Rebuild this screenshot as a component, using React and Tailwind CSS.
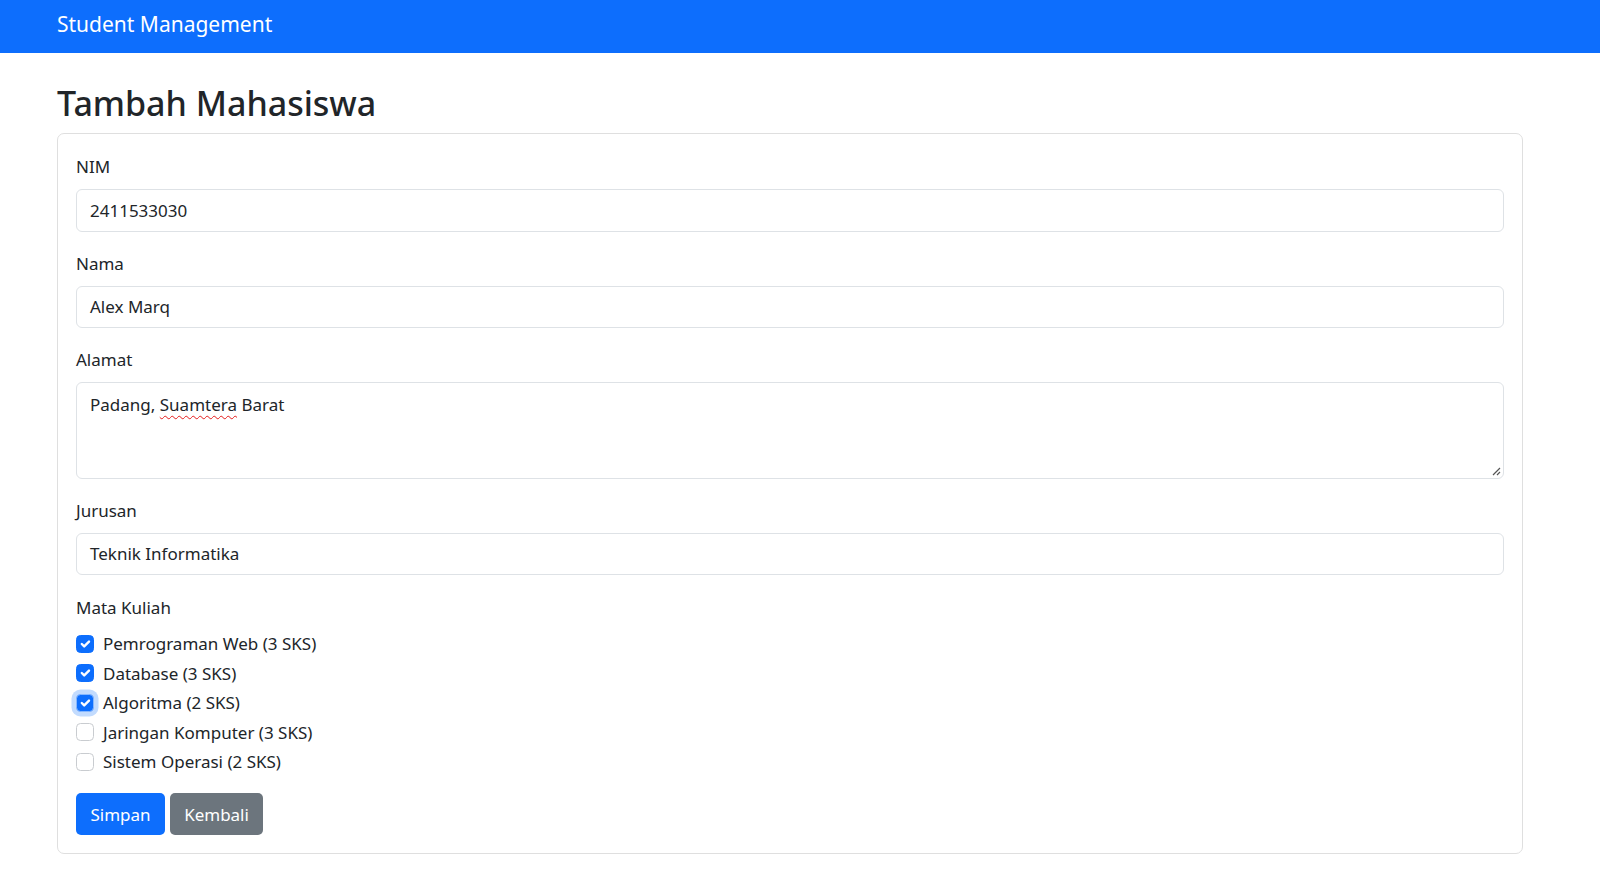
import { useState } from "react";

const COURSES = [
  { name: "Pemrograman Web (3 SKS)", checked: true },
  { name: "Database (3 SKS)", checked: true },
  { name: "Algoritma (2 SKS)", checked: true, focus: true },
  { name: "Jaringan Komputer (3 SKS)", checked: false },
  { name: "Sistem Operasi (2 SKS)", checked: false },
];

const inputCls =
  "block w-full h-[42.5px] px-[13px] border border-[#dee2e6] rounded-[6px] bg-white text-[17px] text-[#212529] outline-none";

const Field = ({ label, last, children }) => (
  <div className={last ? "mb-[19px]" : "mb-[18px]"}>
    <label className="block mb-[9px] leading-[27px]">{label}</label>
    {children}
  </div>
);

const CheckBox = ({ checked, focus, onToggle }) => (
  <span
    onClick={onToggle}
    className={`mt-[4.5px] flex-none w-[18px] h-[18px] rounded-[4.5px] border flex items-center justify-center ${
      checked ? "bg-[#0d6efd] border-[#0d6efd]" : "bg-white border-[#c9ccd0]"
    } ${focus ? "shadow-[0_0_0_4.5px_rgba(13,110,253,0.25)] border-[#86b7fe]" : ""}`}
  >
    {checked && (
      <svg viewBox="0 0 20 20" className="w-[18px] h-[18px]" fill="none" stroke="#fff" strokeWidth="3" strokeLinecap="round" strokeLinejoin="round">
        <path d="M6 10l3 3l6-6" />
      </svg>
    )}
  </span>
);

const App = () => {
  const [courses, setCourses] = useState(COURSES);

  const toggle = (i) =>
    setCourses((prev) => prev.map((c, idx) => (idx === i ? { ...c, checked: !c.checked } : c)));

  return (
    <div className="min-h-screen w-full bg-white text-[#212529] text-[17px] font-['Segoe_UI','Noto_Sans',sans-serif]">
      {/* Navbar */}
      <nav className="h-[53px] bg-[#0d6efd] flex items-center pl-[57px]">
        <span className="text-white text-[21px] leading-none -mt-[5px]">Student Management</span>
      </nav>

      <div className="pl-[57px] pt-[29px]">
        <h2 className="text-[34px] font-medium leading-[43px] mb-[8px]">Tambah Mahasiswa</h2>

        <div className="w-[1466px] border border-[#dfdfdf] rounded-[7px] px-[18px] pt-[19px] pb-[18px]">
          <Field label="NIM">
            <div className={`${inputCls} flex items-center`}>2411533030</div>
          </Field>

          <Field label="Nama">
            <div className={`${inputCls} flex items-center`}>Alex Marq</div>
          </Field>

          <Field label="Alamat">
            <div className="relative w-full h-[96.5px] px-[13px] pt-[8px] border border-[#dee2e6] rounded-[6px] leading-[27px]">
              Padang,{" "}
              <span className="underline decoration-wavy decoration-[#e41b1b] decoration-1 underline-offset-[4px]">Suamtera</span>{" "}
              Barat
              <svg viewBox="0 0 10 10" className="absolute right-[2px] bottom-[2px] w-[10px] h-[10px]" stroke="#555" strokeWidth="1.2">
                <path d="M9 2L2 9M9 6L6 9" />
              </svg>
            </div>
          </Field>

          <Field label="Jurusan" last>
            <div className={`${inputCls} flex items-center`}>Teknik Informatika</div>
          </Field>

          <div className="mb-[15px]">
            <label className="block mb-[9px] leading-[27px]">Mata Kuliah</label>
            {courses.map((c, i) => (
              <div key={c.name} className="flex gap-[9px] h-[29.6px] leading-[27px]">
                <CheckBox checked={c.checked} focus={c.focus} onToggle={() => toggle(i)} />
                <span>{c.name}</span>
              </div>
            ))}
          </div>

          <div className="flex gap-[4.5px]">
            <button className="h-[42.5px] px-[14.5px] rounded-[5px] bg-[#0d6efd] text-white leading-[27px]">Simpan</button>
            <button className="h-[42.5px] px-[14.5px] rounded-[5px] bg-[#6c757d] text-white leading-[27px]">Kembali</button>
          </div>
        </div>
      </div>
    </div>
  );
};

export default App;
